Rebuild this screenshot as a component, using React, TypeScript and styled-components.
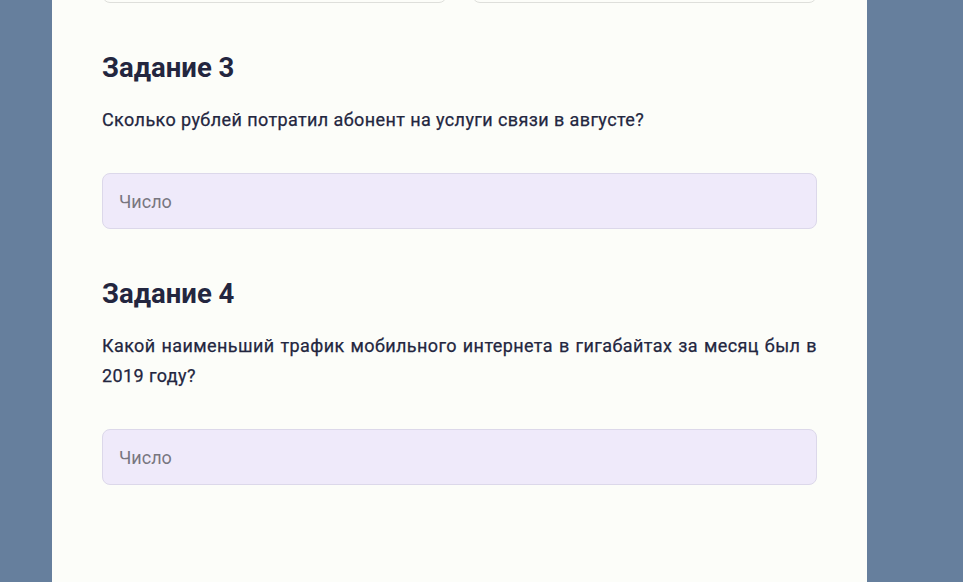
import styled, { createGlobalStyle } from "styled-components";

const GlobalStyle = createGlobalStyle`
  html, body {
    margin: 0;
    padding: 0;
    background: #667f9d;
    font-family: Roboto, "Noto Sans", sans-serif;
  }
  * {
    box-sizing: border-box;
  }
`;

const Page = styled.div`
  min-height: 100vh;
  background: #667f9d;
  overflow: hidden;
`;

const Card = styled.main`
  width: 815px;
  margin-left: 52px;
  min-height: 100vh;
  background: #fcfdf9;
  padding: 0 50px 80px;
  display: flex;
  flex-direction: column;
  gap: 49px;
`;

const PairRow = styled.div`
  margin-top: -53px;
  display: grid;
  grid-template-columns: 1fr 1fr;
  gap: 25px;
`;

const PlainInput = styled.input`
  height: 56px;
  border: 1px solid #dedfdb;
  border-radius: 8px;
  background: #fcfdf9;
`;

const Task = styled.section`
  display: flex;
  flex-direction: column;
`;

const Title = styled.h2`
  margin: 0;
  font-size: 27.5px;
  line-height: 32px;
  font-weight: 700;
  color: #23263f;
`;

const Question = styled.p`
  margin: 21px 0 38px;
  font-size: 18px;
  line-height: 30px;
  font-weight: 400;
  letter-spacing: 0.4px;
  text-align: justify;
  color: #23263f;
  -webkit-text-stroke: 0.25px #23263f;
`;

const NumberInput = styled.input`
  height: 56px;
  width: 100%;
  padding: 0 16px;
  border: 1px solid #dcd8ea;
  border-radius: 8px;
  background: #efeafa;
  font-family: Roboto, "Noto Sans", sans-serif;
  font-size: 18px;
  color: #23263f;
  outline: none;
  &::placeholder {
    color: #78767f;
  }
`;

const tasks = [
  { n: 3, q: "Сколько рублей потратил абонент на услуги связи в августе?" },
  {
    n: 4,
    q: "Какой наименьший трафик мобильного интернета в гигабайтах за месяц был в 2019 году?",
  },
];

export default function App() {
  return (
    <Page>
      <GlobalStyle />
      <Card>
        <PairRow>
          <PlainInput />
          <PlainInput />
        </PairRow>
        {tasks.map((t) => (
          <Task key={t.n}>
            <Title>Задание {t.n}</Title>
            <Question>{t.q}</Question>
            <NumberInput placeholder="Число" />
          </Task>
        ))}
      </Card>
    </Page>
  );
}
